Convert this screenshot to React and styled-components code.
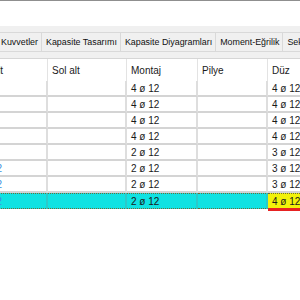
import React from 'react';
import styled, { createGlobalStyle } from 'styled-components';

const GlobalStyle = createGlobalStyle`
  body {
    margin: 0;
    background: #ffffff;
    font-family: 'Liberation Sans', Arial, sans-serif;
  }
`;

const Page = styled.div`
  width: 300px;
  height: 300px;
  overflow: hidden;
  display: flex;
  flex-direction: column;
  background: #ffffff;
`;

const TopArea = styled.div`
  height: 25px;
  border-top: 1px solid #8f8f8f;
  background: #ffffff;
`;

const TabStrip = styled.div`
  height: 32px;
  background: #f0f0f0;
  padding-top: 6px;
  box-sizing: border-box;
  overflow: hidden;
`;

const TabRow = styled.div`
  display: flex;
  margin-left: -4px;
  white-space: nowrap;
`;

const Tab = styled.div`
  height: 18px;
  padding: 0 3px 0 4px;
  display: flex;
  align-items: center;
  border: 1px solid #d9d9d9;
  margin-right: -1px;
  background: #f0f0f0;
  font-size: 8.9px;
  color: #111111;
`;

const GridWrap = styled.div`
  overflow: hidden;
  border-top: 1px solid #d6d6d6;
`;

const Grid = styled.div`
  display: grid;
  grid-template-columns: 80px 79px 71px 70px 80px;
  margin-left: -32px;
`;

const HeadCell = styled.div`
  height: 22px;
  display: flex;
  align-items: center;
  padding-left: 4px;
  border-right: 1px solid #e3e3e3;
  font-size: 10px;
  color: #1a1a1a;
  white-space: nowrap;
  overflow: hidden;
`;

const Cell = styled.div`
  height: 14px;
  display: flex;
  align-items: center;
  padding-left: 4px;
  white-space: nowrap;
  overflow: hidden;
  font-size: 10px;
  color: ${(p) => (p.$link ? '#3d8fe0' : '#1a1a1a')};
  border-right: 2px solid ${(p) => (p.$active ? '#2cc9c9' : '#dedede')};
  border-bottom: 2px solid #d4d4d4;
  background: ${(p) => (p.$active ? '#10e2e2' : '#ffffff')};
  ${(p) =>
    p.$active &&
    `
    border-top: 1px dotted #6b6b3a;
    border-bottom: 1px dotted #6b6b3a;
  `}
  ${(p) =>
    p.$mark &&
    `
    background: #f2f20a;
    border-bottom: 3px solid #e62222;
    border-top: 1px dotted #6b6b3a;
  `}
`;

const NameText = styled.span`
  display: block;
  box-sizing: border-box;
  width: 100%;
  text-align: right;
  padding-right: 44px;
`;

const tabs = ['Kuvvetler', 'Kapasite Tasarımı', 'Kapasite Diyagramları', 'Moment-Eğrilik', 'Seksiyon'];

const rows = [
  { name: '', montaj: '4 ø 12', duz: '4 ø 12' },
  { name: '', montaj: '4 ø 12', duz: '4 ø 12' },
  { name: '', montaj: '4 ø 12', duz: '4 ø 12' },
  { name: '', montaj: '4 ø 12', duz: '4 ø 12' },
  { name: '', montaj: '2 ø 12', duz: '3 ø 12' },
  { name: 'K-12', link: true, montaj: '2 ø 12', duz: '3 ø 12' },
  { name: 'K-12', link: true, montaj: '2 ø 12', duz: '3 ø 12' },
  { name: 'K-12', link: true, montaj: '2 ø 12', duz: '4 ø 12', active: true },
];

export default function App() {
  return (
    <Page>
      <GlobalStyle />
      <TopArea />
      <TabStrip>
        <TabRow>
          {tabs.map((t) => (
            <Tab key={t}>{t}</Tab>
          ))}
        </TabRow>
      </TabStrip>
      <GridWrap>
        <Grid>
          <HeadCell>Sağ alt</HeadCell>
          <HeadCell>Sol alt</HeadCell>
          <HeadCell>Montaj</HeadCell>
          <HeadCell>Pilye</HeadCell>
          <HeadCell>Düz</HeadCell>
          {rows.map((r, i) => (
            <React.Fragment key={i}>
              <Cell $link={r.link} $active={r.active}>
                <NameText>{r.name}</NameText>
              </Cell>
              <Cell $active={r.active} />
              <Cell $active={r.active}>{r.montaj}</Cell>
              <Cell $active={r.active} />
              <Cell $mark={r.active}>{r.duz}</Cell>
            </React.Fragment>
          ))}
        </Grid>
      </GridWrap>
    </Page>
  );
}
